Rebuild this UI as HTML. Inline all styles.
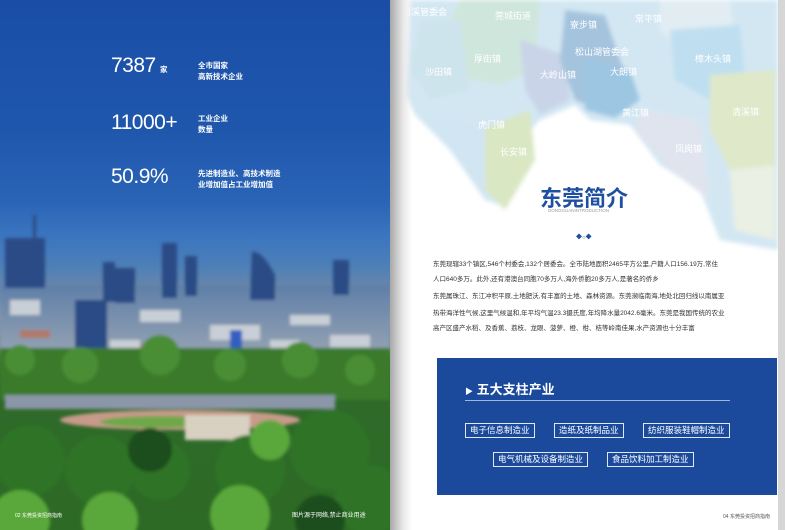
<!DOCTYPE html>
<html><head><meta charset="utf-8"><style>
*{margin:0;padding:0;box-sizing:border-box}
body{width:785px;height:530px;overflow:hidden;position:relative;background:#d6d6d6;font-family:"Liberation Sans","Noto Sans CJK SC",sans-serif}
.l{position:absolute;left:0;top:0;width:390px;height:530px;background:linear-gradient(180deg,#1a4ea6 0%,#1f57ad 25%,#2a64b6 38%,#3d76bf 45%,#4c7fb8 50%,#6d88a8 55%,#8a97a8 60%,#7c8a90 65%,#3d7a35 68%,#2f6a2a 74%,#2d6a25 100%);overflow:hidden}
.n{position:absolute;color:#fff;font-size:21px;letter-spacing:-0.5px}
.d{position:absolute;color:#fff;font-size:7.5px;line-height:11px;font-weight:bold}
.r{position:absolute;left:390px;top:0;width:388px;height:530px;background:#fff;overflow:hidden}
.sh{position:absolute;left:0;top:0;width:22px;height:530px;background:linear-gradient(90deg,#a8a8a8,#e8e8e8 60%,rgba(255,255,255,0))}
.m{position:absolute;color:#fff;font-size:9px}
.p{position:absolute;left:43px;font-size:6.5px;color:#333;white-space:nowrap}
.box{position:absolute;left:47px;top:358px;width:340px;height:137px;background:#1b4a9c}
.tag{position:absolute;border:1.5px solid #dfe8f5;color:#fff;font-size:8.5px;height:15px;line-height:12px;padding:0 4px}
</style></head><body>
<div class="l">
 <svg width="390" height="530" style="position:absolute;left:0;top:0">
  <defs><filter id="b"><feGaussianBlur stdDeviation="1.5"/></filter>
  <linearGradient id="c" x1="0" y1="0" x2="0" y2="1"><stop offset="0" stop-color="#5f7fa8"/><stop offset="1" stop-color="#9aa6b4"/></linearGradient></defs>
  <g filter="url(#b)">
  <rect x="0" y="285" width="390" height="75" fill="url(#c)"/>
  <g fill="#c9cfd6"><rect x="10" y="300" width="30" height="15"/><rect x="140" y="310" width="40" height="12"/><rect x="210" y="325" width="50" height="15"/><rect x="290" y="315" width="40" height="10"/><rect x="330" y="335" width="40" height="12"/><rect x="110" y="340" width="30" height="10"/><rect x="270" y="340" width="30" height="10"/></g>
  <g fill="#b07a6a"><rect x="20" y="330" width="30" height="8"/><rect x="200" y="352" width="40" height="8"/><rect x="140" y="345" width="25" height="6"/></g>
  <g fill="#2a4c85">
   <rect x="5" y="238" width="40" height="50"/><rect x="33" y="215" width="3" height="30"/>
   <rect x="103" y="262" width="12" height="40"/><rect x="115" y="268" width="20" height="35"/>
   <rect x="162" y="243" width="15" height="55"/><rect x="185" y="256" width="12" height="40"/>
   <path d="M250 300 L252 252 Q262 250 275 275 L275 300Z"/><rect x="333" y="260" width="16" height="35"/>
   <rect x="75" y="300" width="32" height="62"/><rect x="230" y="330" width="12" height="30" fill="#3060c0"/>
  </g>
  <rect x="0" y="348" width="390" height="52" fill="#3a7a2c"/>
  <g fill="#4a8e35"><circle cx="20" cy="360" r="15"/><circle cx="80" cy="365" r="18"/><circle cx="160" cy="355" r="20"/><circle cx="230" cy="365" r="16"/><circle cx="300" cy="360" r="18"/><circle cx="360" cy="370" r="15"/></g>
  <rect x="5" y="395" width="330" height="14" fill="#8b96a8"/>
  <ellipse cx="180" cy="420" rx="120" ry="10" fill="#c79a8a"/>
  <ellipse cx="160" cy="422" rx="60" ry="6" fill="#6fa848"/>
  <rect x="185" y="415" width="65" height="25" fill="#d8d0c0"/>
  <g fill="#2f7326"><circle cx="30" cy="460" r="35"/><circle cx="100" cy="470" r="35"/><circle cx="160" cy="470" r="30"/><circle cx="250" cy="470" r="35"/><circle cx="330" cy="450" r="40"/><circle cx="370" cy="500" r="35"/></g>
  <g fill="#1f4e1c"><circle cx="150" cy="450" r="22"/><circle cx="320" cy="520" r="25"/></g>
  <g fill="#5aa83a"><circle cx="20" cy="520" r="30"/><circle cx="110" cy="520" r="28"/><circle cx="240" cy="515" r="30"/><circle cx="270" cy="440" r="20"/></g>
  </g>
 </svg>
 <div class="n" style="left:111px;top:54px">7387</div><div class="d" style="left:160px;top:64px">家</div>
 <div class="d" style="left:198px;top:60px">全市国家<br>高新技术企业</div>
 <div class="n" style="left:111px;top:111px">11000+</div>
 <div class="d" style="left:198px;top:113px">工业企业<br>数量</div>
 <div class="n" style="left:111px;top:165px">50.9%</div>
 <div class="d" style="left:198px;top:168px">先进制造业、高技术制造<br>业增加值占工业增加值</div>
 <div style="position:absolute;left:15px;top:512px;color:#fff;font-size:5px">02 东莞投资招商指南</div>
 <div style="position:absolute;left:292px;top:510px;color:#fff;font-size:6px">图片源于网络,禁止商业用途</div>
</div>
<div class="r">
 <svg width="388" height="260" style="position:absolute;left:0;top:0">
  <defs><filter id="s"><feGaussianBlur stdDeviation="2"/></filter></defs>
  <g filter="url(#s)">
  <path d="M0 0 H388 V250 L330 240 L310 190 L270 165 L240 125 L200 120 L185 105 L150 120 L120 150 L110 205 L95 200 L60 150 L25 115 L5 70Z" fill="#d3e7f3"/>
  <path d="M70 0 L150 0 L145 70 L110 85 L60 75 L55 30Z" fill="#cfe6dc"/>
  <path d="M30 20 L70 20 L80 90 L40 100 L20 70Z" fill="#cde4ec"/>
  <path d="M130 40 L175 55 L180 100 L150 115 L135 90Z" fill="#c9d4e8"/>
  <path d="M175 10 L215 15 L230 60 L245 90 L220 115 L185 100 L170 60Z" fill="#a4c3dd"/>
  <path d="M195 60 L240 70 L250 100 L225 118 L195 110Z" fill="#9dc6e2"/>
  <path d="M270 0 L340 0 L345 50 L300 60 L270 30Z" fill="#e2edf3"/>
  <path d="M280 30 L350 25 L355 75 L320 100 L285 80Z" fill="#bfdff0"/>
  <path d="M320 75 L385 70 L385 165 L340 170 L320 130Z" fill="#dfe8c8"/>
  <path d="M90 130 L140 110 L145 160 L115 210 L95 190Z" fill="#d9e7c3"/>
  <path d="M40 120 L95 125 L95 195 L60 150Z" fill="#d1e5f2"/>
  <path d="M340 170 L385 165 L385 240 L345 230Z" fill="#eaf0e3"/>
  <path d="M250 110 L310 120 L320 200 L280 170 L245 130Z" fill="#dfe4ee"/>
  <path d="M0 0 H20 L10 200 L0 200Z" fill="#fff"/>
  </g>
 </svg>
 <div class="m" style="left:12px;top:5px">清溪管委会</div><div class="m" style="left:105px;top:9px">莞城街道</div>
 <div class="m" style="left:180px;top:18px">寮步镇</div><div class="m" style="left:245px;top:12px">常平镇</div>
 <div class="m" style="left:84px;top:52px">厚街镇</div><div class="m" style="left:35px;top:65px">沙田镇</div>
 <div class="m" style="left:185px;top:45px">松山湖管委会</div><div class="m" style="left:150px;top:68px">大岭山镇</div>
 <div class="m" style="left:220px;top:65px">大朗镇</div><div class="m" style="left:305px;top:52px">樟木头镇</div>
 <div class="m" style="left:232px;top:106px">黄江镇</div><div class="m" style="left:88px;top:118px">虎门镇</div>
 <div class="m" style="left:110px;top:145px">长安镇</div><div class="m" style="left:285px;top:142px">凤岗镇</div>
 <div class="m" style="left:342px;top:105px">清溪镇</div>
 <div class="sh"></div>
 <div style="position:absolute;left:150px;top:181px;font-size:22px;font-weight:bold;color:#1f4fa0">东莞简介</div>
 <div style="position:absolute;left:158px;top:208px;font-size:4.5px;color:#999">DONGGUANINTRODUCTION</div>
 <div style="position:absolute;left:186px;top:232px;font-size:6px;color:#1f4fa0">◆○◆</div>
 <div class="p" style="top:258px">东莞现辖33个镇区,546个村委会,132个居委会。全市陆地面积2465平方公里,户籍人口156.19万,常住</div>
 <div class="p" style="top:273px">人口640多万。此外,还有港澳台同胞70多万人,海外侨胞20多万人,是著名的侨乡</div>
 <div class="p" style="top:290px">东莞属珠江、东江冲积平原,土地肥沃,有丰富的土地、森林资源。东莞濒临南海,地处北回归线以南属亚</div>
 <div class="p" style="top:307px">热带海洋性气候,这里气候温和,年平均气温23.3摄氏度,年均降水量2042.6毫米。东莞是我国传统的农业</div>
 <div class="p" style="top:322px">高产区盛产水稻、及香蕉、荔枝、龙眼、菠萝、橙、柑、桔等岭南佳果,水产资源也十分丰富</div>
 <div class="box">
  <div style="position:absolute;left:28px;top:21px;color:#fff;font-size:13px;font-weight:bold"><span style="font-size:8px">▶</span> 五大支柱产业</div>
  <div style="position:absolute;left:28px;top:42px;width:265px;height:1px;background:#9db7e0"></div>
  <div class="tag" style="left:28px;top:65px">电子信息制造业</div>
  <div class="tag" style="left:117px;top:65px">造纸及纸制品业</div>
  <div class="tag" style="left:206px;top:65px">纺织服装鞋帽制造业</div>
  <div class="tag" style="left:56px;top:94px">电气机械及设备制造业</div>
  <div class="tag" style="left:170px;top:94px">食品饮料加工制造业</div>
 </div>
 <div style="position:absolute;left:333px;top:513px;font-size:5px;color:#555">04 东莞投资招商指南</div>
</div>
</body></html>
